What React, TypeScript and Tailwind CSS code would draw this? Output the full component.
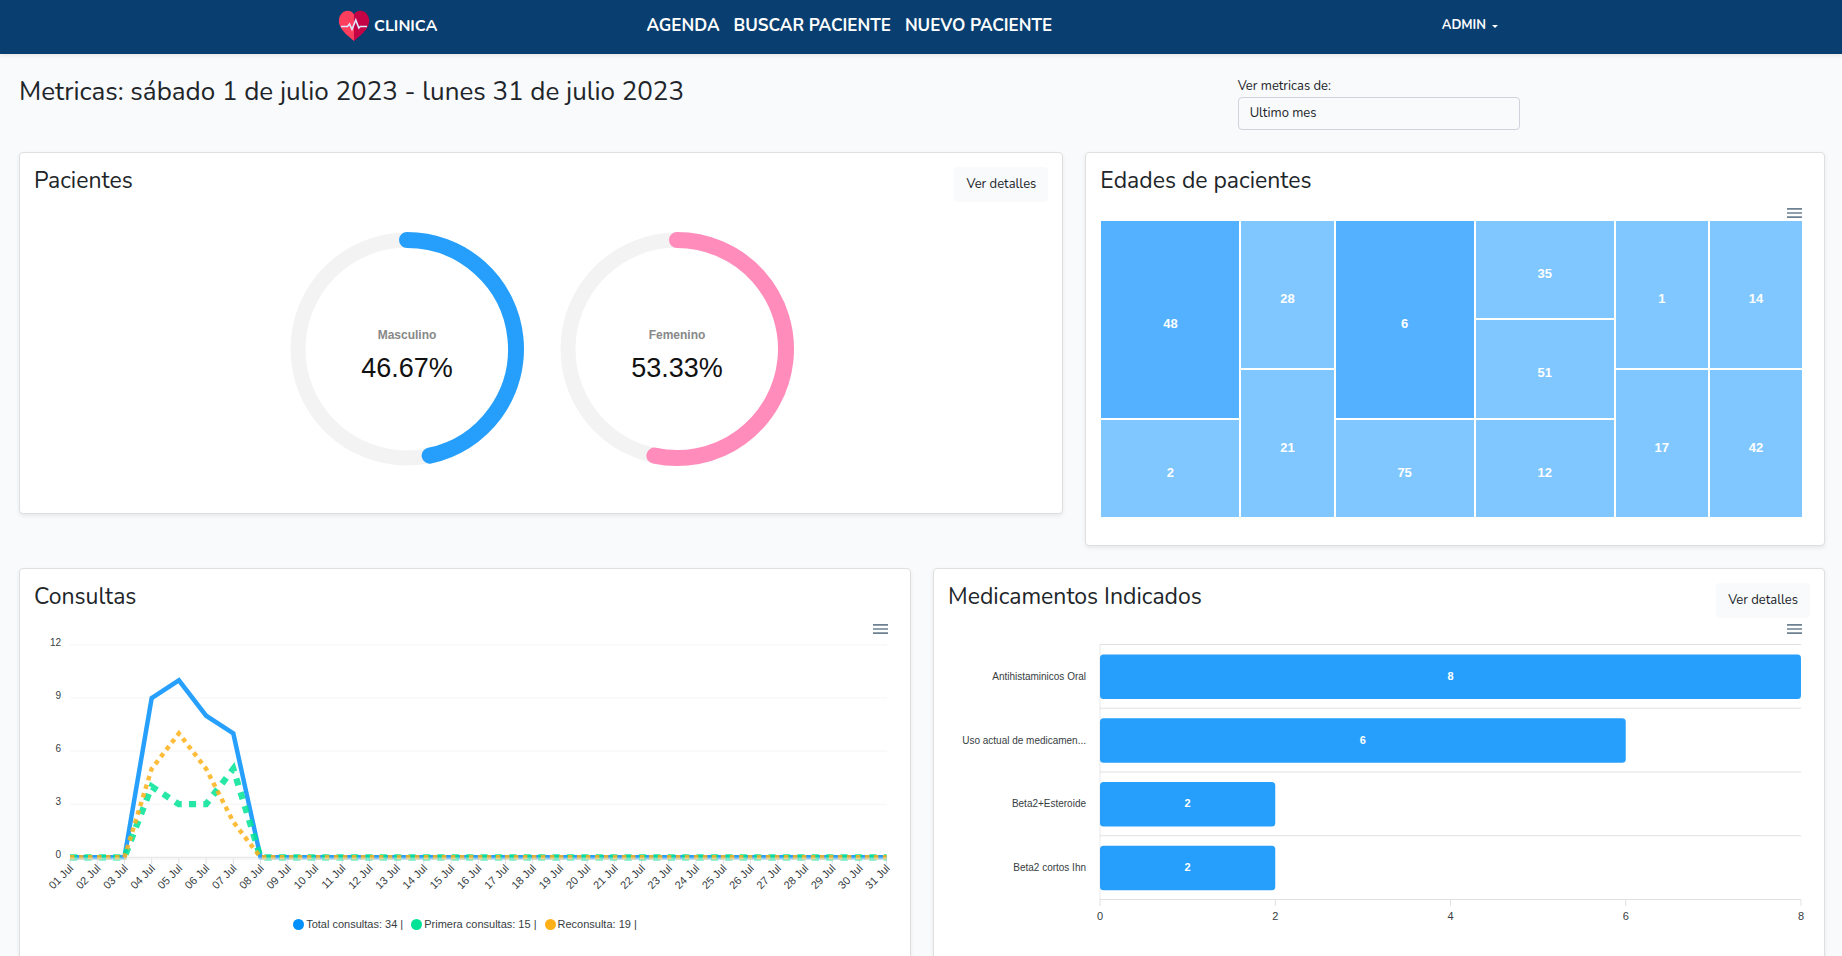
import React from "react";

const DAYS = Array.from({ length: 31 }, (_, i) => String(i + 1).padStart(2, "0") + " Jul");

const series = [
  { name: "Total consultas: 34 |", color: "#008ffb", width: 4.5, dash: undefined, data: [0, 0, 0, 9, 10, 8, 7] },
  { name: "Primera consultas: 15 |", color: "#00e396", width: 6.3, dash: "7.2 7.2", data: [0, 0, 0, 4, 3, 3, 5] },
  { name: "Reconsulta: 19 |", color: "#feb019", width: 4.5, dash: "4.5 4.5", data: [0, 0, 0, 5, 7, 5, 2] },
];

const medicamentos = [
  { name: "Antihistaminicos Oral", total: 8 },
  { name: "Uso actual de medicamen...", total: 6 },
  { name: "Beta2+Esteroide", total: 2 },
  { name: "Beta2 cortos Ihn", total: 2 },
];

const HeartLogo = () => (
  <svg viewBox="0 0 32 32" className="size-8" aria-hidden="true">
    <path d="M16 4.2C13.500 .3 8.500 -.3 5 2.200C1 5 -.2 10.500 1.800 15.500C4.200 21.500 9.500 25.500 16 31Z" fill="#ff3e5e" />
    <path d="M16 4.2C18.500 .3 23.500 -.3 27 2.200C31 5 32.200 10.500 30.200 15.500C27.800 21.500 22.500 25.500 16 31Z" fill="#c40346" />
    <path d="M3 16.500H9.500L11.500 14L14 19.500L17.800 10L20.800 18L22.200 16.500H29" fill="none" stroke="#dcebff" strokeWidth="1.600" />
  </svg>
);

const NavBar = () => {
  return (
    <header className="bg-[#083e70] pr-1.5 text-white shadow-[0_2px_4px_rgba(0,0,0,0.075)]">
      <div className="mx-auto flex h-[54px] max-w-[1160px] items-center pb-0.5 font-bold">
        <a href="#" className="flex items-center gap-1 text-base">
          <HeartLogo />
          CLINICA
        </a>
        <nav className="ml-[209px] flex gap-3.5 text-[17px]">
          <a href="#">AGENDA</a>
          <a href="#">BUSCAR PACIENTE</a>
          <a href="#">NUEVO PACIENTE</a>
        </nav>
        <button className="ml-auto flex items-center gap-1.5 text-[13px]">
          ADMIN
          <svg viewBox="0 0 8 4" className="h-[3px] w-1.5" aria-hidden="true">
            <path d="M0 0H8L4 4Z" fill="currentColor" />
          </svg>
        </button>
      </div>
    </header>
  );
};

const Card = ({
  title,
  details,
  className,
  children,
}: {
  title: string;
  details?: boolean;
  className: string;
  children: React.ReactNode;
}) => {
  return (
    <section
      className={`rounded border border-[#dfdfdf] bg-white px-3.5 pt-3.5 shadow-[0_2px_4px_rgba(0,0,0,0.075)] ${className}`}
    >
      <div className="flex h-[35px] items-start justify-between">
        <h2 className="text-[23px] leading-[27px]">{title}</h2>
        {details && (
          <button className="h-[35px] rounded bg-[#f8fafc] px-3 text-[13px]">Ver detalles</button>
        )}
      </div>
      {children}
    </section>
  );
};

const ChartMenu = () => (
  <button className="mt-1.5 mr-2 ml-auto block" aria-label="Menu">
    <svg viewBox="3 6 18 12" className="h-2.5 w-[15px]" fill="#6e8192">
      <path d="M3 18h18v-2H3v2zm0-5h18v-2H3v2zm0-7v2h18V6H3z" />
    </svg>
  </button>
);

const Radial = ({ label, value, color }: { label: string; value: number; color: string }) => {
  const angle = (value / 100) * 2 * Math.PI;
  const x = 135 + 109 * Math.sin(angle);
  const y = 135 - 109 * Math.cos(angle);
  return (
    <svg viewBox="0 0 270 270" className="w-[270px]">
      <circle cx="135" cy="135" r="109" fill="none" stroke="#f3f3f3" strokeWidth="15" />
      <path
        d={`M135 26A109 109 0 ${value > 50 ? 1 : 0} 1 ${x} ${y}`}
        fill="none"
        stroke={color}
        strokeWidth="16"
        strokeLinecap="round"
      />
      <text x="135" y="125" textAnchor="middle" className="fill-[#888888] text-[12px] font-bold">
        {label}
      </text>
      <text x="135" y="163" textAnchor="middle" className="fill-[#111111] text-[27px]">
        {value}%
      </text>
    </svg>
  );
};

const Cell = ({ value, size }: { value: number; size: string }) => (
  <div className={`flex items-center justify-center pt-2 ${size}`}>{value}</div>
);

const AgesMap = () => {
  return (
    <div className="mt-[3px] mr-2 ml-px grid h-[296px] grid-cols-[3fr_2fr_3fr_3fr_2fr_2fr] grid-rows-6 gap-0.5 font-[Helvetica,'Liberation_Sans',sans-serif] text-[13px] font-bold text-white">
      <Cell value={48} size="row-span-4 bg-[#53b1ff]" />
      <Cell value={28} size="row-span-3 bg-[#81c7ff]" />
      <Cell value={6} size="row-span-4 bg-[#53b1ff]" />
      <Cell value={35} size="row-span-2 bg-[#81c7ff]" />
      <Cell value={1} size="row-span-3 bg-[#81c7ff]" />
      <Cell value={14} size="row-span-3 bg-[#81c7ff]" />
      <Cell value={51} size="col-start-4 row-span-2 row-start-3 bg-[#81c7ff]" />
      <Cell value={21} size="col-start-2 row-span-3 row-start-4 bg-[#81c7ff]" />
      <Cell value={17} size="col-start-5 row-span-3 row-start-4 bg-[#81c7ff]" />
      <Cell value={42} size="col-start-6 row-span-3 row-start-4 bg-[#81c7ff]" />
      <Cell value={2} size="col-start-1 row-span-2 row-start-5 bg-[#81c7ff]" />
      <Cell value={75} size="col-start-3 row-span-2 row-start-5 bg-[#81c7ff]" />
      <Cell value={12} size="col-start-4 row-span-2 row-start-5 bg-[#81c7ff]" />
    </div>
  );
};

const dayX = (i: number) => 36 + i * 27.22;
const countY = (n: number) => 223.3 - n * 17.7;

const ConsultasChart = () => {
  return (
    <>
      <svg viewBox="0 0 862 270" className="block w-full font-[Helvetica,'Liberation_Sans',sans-serif]">
        {[12, 9, 6, 3, 0].map((n) => (
          <g key={n}>
            <line x1="36" x2="853" y1={countY(n)} y2={countY(n)} stroke={n ? "#f5f5f5" : "#e0e0e0"} />
            <text x="27" y={countY(n) + 1} textAnchor="end" className="fill-[#373d3f] text-[10px]">
              {n}
            </text>
          </g>
        ))}
        {DAYS.map((day, i) => (
          <g key={day}>
            <line x1={dayX(i)} x2={dayX(i)} y1="224" y2="230" stroke="#e0e0e0" />
            <text
              x={dayX(i) + 4}
              y="235"
              textAnchor="end"
              className="fill-[#373d3f] text-[11px]"
              transform={`rotate(-45 ${dayX(i) + 4} 235)`}
            >
              {day}
            </text>
          </g>
        ))}
        {series.map((s) => (
          <path
            key={s.name}
            d={DAYS.map((_, i) => `${i ? "L" : "M"}${dayX(i)} ${countY(s.data[i] ?? 0)}`).join("")}
            fill="none"
            stroke={s.color}
            strokeOpacity="0.85"
            strokeWidth={s.width}
            strokeDasharray={s.dash}
          />
        ))}
        {/* x axis border, half see-through over the lines */}
        <rect x="36" y="223.500" width="817" height="2.500" fill="#f0f0f0" fillOpacity="0.5" />
      </svg>
      <div className="mt-3.5 flex justify-center gap-2 font-[Helvetica,'Liberation_Sans',sans-serif] text-[11px] leading-3 text-[#373d3f]">
        {series.map((s) => (
          <div key={s.name} className="flex items-center gap-0.5">
            <span className="size-[11px] rounded-full" style={{ background: s.color }} />
            {s.name}
          </div>
        ))}
      </div>
    </>
  );
};

const unitX = (n: number) => 152 + n * 87.625;

const MedicamentosChart = () => {
  return (
    <svg viewBox="0 0 862 310" className="block w-full font-[Helvetica,'Liberation_Sans',sans-serif]">
      <line x1="152" x2="152" y1="10" y2="266" stroke="#e8e8e8" />
      {[0, 1, 2, 3, 4].map((i) => (
        <line key={i} x1="152" x2="853" y1={10.5 + i * 63.75} y2={10.5 + i * 63.75} stroke="#e0e0e0" />
      ))}
      {medicamentos.map((m, i) => {
        const mid = 42.8 + i * 63.75;
        return (
          <g key={m.name}>
            <rect x="152" y={mid - 22.3} width={unitX(m.total) - 152} height="44.600" rx="3.500" fill="#269ffc" />
            <text x="138" y={mid + 3} textAnchor="end" className="fill-[#373d3f] text-[10px]">
              {m.name}
            </text>
            <text
              x={(152 + unitX(m.total)) / 2}
              y={mid + 3}
              textAnchor="middle"
              className="fill-white text-[11px] font-bold"
            >
              {m.total}
            </text>
          </g>
        );
      })}
      {[0, 2, 4, 6, 8].map((n) => (
        <g key={n}>
          <line x1={unitX(n)} x2={unitX(n)} y1="266" y2="272" stroke="#e0e0e0" />
          <text x={unitX(n)} y="286" textAnchor="middle" className="fill-[#373d3f] text-[11px]">
            {n}
          </text>
        </g>
      ))}
    </svg>
  );
};

export default function App() {
  return (
    <div className="min-h-screen bg-[#f8fafc] font-[Nunito,'Open_Sans',sans-serif] text-[#212529]">
      <NavBar />
      <main className="grid grid-cols-12 items-start gap-x-[22px] gap-y-[22px] pt-[22px] pr-[17px] pl-[19px]">
        <h1 className="col-span-8 text-[26px] leading-[31px]">
          Metricas: sábado 1 de julio 2023 - lunes 31 de julio 2023
        </h1>
        <div className="col-span-2 flex flex-col text-[13px]">
          <label htmlFor="periodo" className="leading-[21px]">
            Ver metricas de:
          </label>
          <select
            id="periodo"
            className="h-[33px] appearance-none rounded border border-[#ced4da] bg-[#f8fafc] px-[11px]"
          >
            <option>Ultimo mes</option>
          </select>
        </div>

        <Card title="Pacientes" details className="col-span-7 pb-[29px]">
          <div className="mt-3 flex justify-center pl-0.5 font-[Helvetica,'Liberation_Sans',sans-serif]">
            <Radial label="Masculino" value={46.67} color="#269ffc" />
            <Radial label="Femenino" value={53.33} color="#ff8cba" />
          </div>
        </Card>
        <Card title="Edades de pacientes" className="col-span-5 pb-7">
          <ChartMenu />
          <AgesMap />
        </Card>

        <Card title="Consultas" className="col-span-6 pb-12">
          <ChartMenu />
          <ConsultasChart />
        </Card>
        <Card title="Medicamentos Indicados" details className="col-span-6 pb-8">
          <ChartMenu />
          <MedicamentosChart />
        </Card>
      </main>
    </div>
  );
}
